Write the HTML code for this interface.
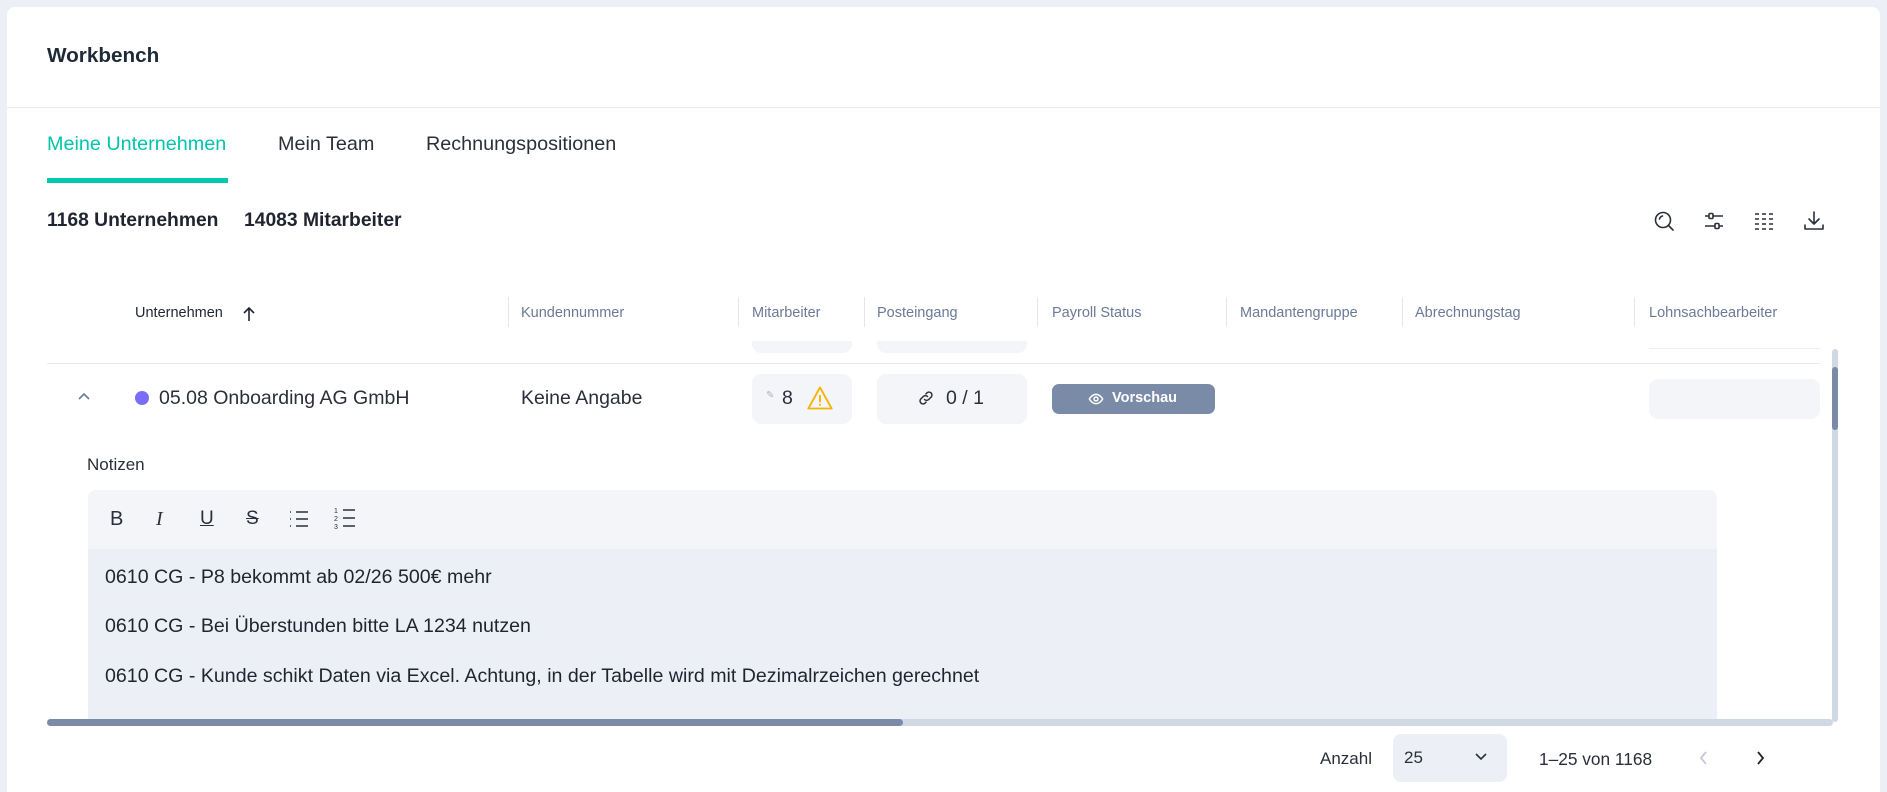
<!DOCTYPE html>
<html><head><meta charset="utf-8"><style>
*{box-sizing:border-box;margin:0;padding:0}
html{width:1887px;height:792px;overflow:hidden}
body{width:1887px;height:792px;background:#eceff6;font-family:"Liberation Sans",Arial,sans-serif;position:relative;overflow:hidden;color:#1f2430}
.card{position:absolute;left:7px;top:7px;width:1873px;height:785px;background:#fff;border-radius:8px 8px 0 0}
.a{position:absolute;white-space:nowrap}
.hd{font-size:14.5px;color:#6b7a96;top:305px}
.sep{position:absolute;top:297px;width:1px;height:30px;background:#e3e6ec}
.pill{position:absolute;background:#f3f5f9;border-radius:9px}
.tl{position:absolute;top:508px}
.ln{font-size:19.6px;color:#1f2430;left:105px}
</style></head><body>
<div class="card"></div>
<div class="a" style="left:47px;top:44px;font-size:20.7px;font-weight:bold;color:#1f2a37">Workbench</div>
<div style="position:absolute;left:7px;top:107px;width:1873px;height:1px;background:#e8ebf0"></div>

<div class="a" style="left:47px;top:133px;font-size:19.8px;color:#00c4ae">Meine Unternehmen</div>
<div class="a" style="left:278px;top:133px;font-size:19.8px;color:#2a2f3a">Mein Team</div>
<div class="a" style="left:426px;top:133px;font-size:19.8px;color:#2a2f3a">Rechnungspositionen</div>
<div style="position:absolute;left:47px;top:178px;width:181px;height:5px;background:#00c9b0"></div>

<div class="a" style="left:47px;top:210px;font-size:19.3px;font-weight:bold;color:#1f2430">1168 Unternehmen</div>
<div class="a" style="left:244px;top:210px;font-size:19.3px;font-weight:bold;color:#1f2430">14083 Mitarbeiter</div>

<svg class="a" style="left:1652px;top:209px" width="24" height="24" viewBox="0 0 24 24" fill="none" stroke="#2a2f3a" stroke-width="1.6" stroke-linecap="round"><circle cx="11" cy="11" r="7.5"/><path d="M16.5 16.5L21 21M7.5 10a4 4 0 0 1 3-3"/></svg>
<svg class="a" style="left:1702px;top:209px" width="24" height="24" viewBox="0 0 24 24" fill="none" stroke="#2a2f3a" stroke-width="1.6"><path d="M3 7h4M11 7h10M3 17h10M17 17h4"/><rect x="7" y="4.5" width="4" height="5" rx="1"/><rect x="13" y="14.5" width="4" height="5" rx="1"/></svg>
<svg class="a" style="left:1752px;top:209px" width="24" height="24" viewBox="0 0 24 24" fill="none" stroke="#2a2f3a" stroke-width="1.6"><path d="M3 5h4M3 10h4M3 15h4M3 20h4M10 5h4M10 10h4M10 15h4M10 20h4M17 5h4M17 10h4M17 15h4M17 20h4"/></svg>
<svg class="a" style="left:1802px;top:209px" width="24" height="24" viewBox="0 0 24 24" fill="none" stroke="#2a2f3a" stroke-width="1.6" stroke-linecap="round" stroke-linejoin="round"><path d="M12 3v12M7 10l5 5 5-5M3 16v4h18v-4"/></svg>

<div class="a hd" style="left:135px;color:#1f2430">Unternehmen</div>
<svg class="a" style="left:241px;top:305px" width="16" height="18" viewBox="0 0 16 18" fill="none" stroke="#1f2430" stroke-width="1.6"><path d="M8 16V3M3 8l5-5 5 5"/></svg>
<div class="sep" style="left:508px"></div><div class="a hd" style="left:521px">Kundennummer</div>
<div class="sep" style="left:738px"></div><div class="a hd" style="left:752px">Mitarbeiter</div>
<div class="sep" style="left:864px"></div><div class="a hd" style="left:877px">Posteingang</div>
<div class="sep" style="left:1037px"></div><div class="a hd" style="left:1052px">Payroll Status</div>
<div class="sep" style="left:1226px"></div><div class="a hd" style="left:1240px">Mandantengruppe</div>
<div class="sep" style="left:1402px"></div><div class="a hd" style="left:1415px">Abrechnungstag</div>
<div class="sep" style="left:1634px"></div><div class="a hd" style="left:1649px">Lohnsachbearbeiter</div>

<div class="pill" style="left:752px;top:341px;width:100px;height:12px;border-radius:0 0 9px 9px"></div>
<div class="pill" style="left:877px;top:341px;width:150px;height:12px;border-radius:0 0 9px 9px"></div>
<div style="position:absolute;left:1649px;top:348px;width:171px;height:1px;background:#eef0f4"></div>
<div style="position:absolute;left:47px;top:363px;width:1773px;height:1px;background:#e6e9ee"></div>

<svg class="a" style="left:77px;top:391px" width="14" height="10" viewBox="0 0 14 10" fill="none" stroke="#6b7a96" stroke-width="1.6"><path d="M2 8l5-5 5 5"/></svg>
<div style="position:absolute;left:135px;top:391px;width:14px;height:14px;border-radius:50%;background:#7b6ef6"></div>
<div class="a" style="left:159px;top:387px;font-size:19.5px;color:#2a2f3a">05.08 Onboarding AG GmbH</div>
<div class="a" style="left:521px;top:387px;font-size:19.5px;color:#2a2f3a">Keine Angabe</div>

<div class="pill" style="left:752px;top:374px;width:100px;height:50px"></div>
<div class="a" style="left:766px;top:390px;font-size:10px;color:#aab2c0">✎</div>
<div class="a" style="left:782px;top:387px;font-size:19.5px;color:#2a2f3a">8</div>
<svg class="a" style="left:806px;top:384px" width="28" height="28" viewBox="0 0 24 24" fill="none" stroke="#f5b400" stroke-width="1.6" stroke-linejoin="round"><path d="M12 3L2 21h20z"/><path d="M12 10v5M12 17.5v.5" stroke-linecap="round"/></svg>
<div class="pill" style="left:877px;top:374px;width:150px;height:50px"></div>
<svg class="a" style="left:917px;top:389px" width="18" height="18" viewBox="0 0 24 24" fill="none" stroke="#2a2f3a" stroke-width="2" stroke-linecap="round"><path d="M10 14a4 4 0 0 0 5.6 0l3.5-3.5a4 4 0 0 0-5.6-5.6L12 6.4M14 10a4 4 0 0 0-5.6 0l-3.5 3.5a4 4 0 0 0 5.6 5.6L12 17.6"/></svg>
<div class="a" style="left:946px;top:387px;font-size:19.5px;color:#2a2f3a">0 / 1</div>

<div style="position:absolute;left:1052px;top:384px;width:163px;height:30px;border-radius:7px;background:#7a8ba8"></div>
<svg class="a" style="left:1088px;top:391px" width="16" height="16" viewBox="0 0 24 24" fill="none" stroke="#fff" stroke-width="2.2"><path d="M2 12s4-7 10-7 10 7 10 7-4 7-10 7S2 12 2 12z"/><circle cx="12" cy="12" r="3"/></svg>
<div class="a" style="left:1112px;top:390px;font-size:14.5px;font-weight:bold;color:#fff">Vorschau</div>
<div class="pill" style="left:1649px;top:379px;width:171px;height:40px;background:#f4f5f8"></div>

<div style="position:absolute;left:1832px;top:349px;width:6px;height:373px;border-radius:3px;background:#d0d8e4"></div>
<div style="position:absolute;left:1832px;top:367px;width:6px;height:63px;border-radius:3px;background:#7a8ba8"></div>

<div class="a" style="left:87px;top:455px;font-size:17px;color:#2a2f3a">Notizen</div>
<div style="position:absolute;left:88px;top:490px;width:1629px;height:230px;border-radius:8px 8px 0 0;background:#eceff6;overflow:hidden"><div style="height:59px;background:#f4f5f9"></div></div>
<div class="tl a" style="left:110px;font-size:20px;color:#2a2f3a">B</div>
<div class="tl a" style="left:156px;font-size:20px;font-style:italic;color:#2a2f3a;font-family:'Liberation Serif',serif">I</div>
<div class="tl a" style="left:200px;font-size:19px;text-decoration:underline;color:#2a2f3a">U</div>
<div class="tl a" style="left:246px;font-size:19px;text-decoration:line-through;color:#2a2f3a">S</div>
<svg class="a" style="left:288px;top:508px" width="22" height="22" viewBox="0 0 22 22" fill="none" stroke="#2a2f3a" stroke-width="1.6"><path d="M2 4h1M2 11h1M2 18h1M8 4h12M8 11h12M8 18h12"/></svg>
<svg class="a" style="left:334px;top:506px" width="22" height="24" viewBox="0 0 22 24" fill="none" stroke="#2a2f3a" stroke-width="1.6"><path d="M9 4h12M9 12h12M9 20h12"/><text x="0" y="7" font-size="7" fill="#2a2f3a" stroke="none">1</text><text x="0" y="15" font-size="7" fill="#2a2f3a" stroke="none">2</text><text x="0" y="23" font-size="7" fill="#2a2f3a" stroke="none">3</text></svg>

<div class="a ln" style="top:566px">0610 CG - P8 bekommt ab 02/26 500€ mehr</div>
<div class="a ln" style="top:615px">0610 CG - Bei Überstunden bitte LA 1234 nutzen</div>
<div class="a ln" style="top:665px">0610 CG - Kunde schikt Daten via Excel. Achtung, in der Tabelle wird mit Dezimalrzeichen gerechnet</div>

<div style="position:absolute;left:47px;top:719px;width:1786px;height:7px;border-radius:4px;background:#d0d8e4"></div>
<div style="position:absolute;left:47px;top:719px;width:856px;height:7px;border-radius:4px;background:#7a8ba8"></div>

<div class="a" style="left:1320px;top:749px;font-size:17px;color:#2a2f3a">Anzahl</div>
<div style="position:absolute;left:1393px;top:734px;width:114px;height:48px;border-radius:8px;background:#eceff6"></div>
<div class="a" style="left:1404px;top:748px;font-size:17px;color:#2a2f3a">25</div>
<svg class="a" style="left:1474px;top:752px" width="14" height="10" viewBox="0 0 14 10" fill="none" stroke="#2a2f3a" stroke-width="1.6"><path d="M2 2l5 5 5-5"/></svg>
<div class="a" style="left:1539px;top:749px;font-size:17.3px;color:#2a2f3a">1–25 von 1168</div>
<svg class="a" style="left:1698px;top:750px" width="12" height="16" viewBox="0 0 12 16" fill="none" stroke="#c5cad4" stroke-width="1.8"><path d="M8 2L3 8l5 6"/></svg>
<svg class="a" style="left:1754px;top:750px" width="12" height="16" viewBox="0 0 12 16" fill="none" stroke="#1f2430" stroke-width="1.8"><path d="M4 2l5 6-5 6"/></svg>
</body></html>
